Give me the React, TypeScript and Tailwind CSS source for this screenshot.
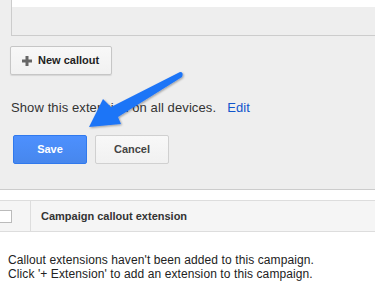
import React from "react";

export default function App() {
  return (
    <div className="relative w-[375px] h-[301px] overflow-hidden bg-white" style={{ fontFamily: '"Liberation Sans", Arial, sans-serif' }}>
      <div className="h-[190px] bg-[#eeeeee] border-b border-[#cccccc]">
        <div className="ml-[11px] h-[36px] border-l border-b border-[#cccccc] flex flex-col">
          <div className="h-[7px] bg-white" />
        </div>
        <div className="pt-[10px] pl-[10px]">
          <button className="h-[29px] w-[102px] flex items-center gap-[6px] pl-[11px] border border-[#c6c6c6] rounded-[2px] bg-gradient-to-b from-[#f8f8f8] to-[#f1f1f1] shadow-[0_1px_1px_rgba(0,0,0,0.1)] text-[11px] font-bold text-[#222]">
            <svg width="10" height="10" viewBox="0 0 10 10"><path d="M3.5 0h3v3.5H10v3H6.5V10h-3V6.5H0v-3h3.5z" fill="#666" /></svg>
            New callout
          </button>
        </div>
        <div className="pl-[11px] mt-[25px] text-[13px] tracking-[0.1px] text-[#333] leading-[16px]">
          Show this extension on all devices.<span className="ml-[11px] text-[#1155cc]">Edit</span>
        </div>
        <div className="flex gap-[8px] pl-[13px] mt-[19px]">
          <button className="h-[29px] w-[74px] border border-[#3079ed] rounded-[2px] bg-gradient-to-b from-[#4d90fe] to-[#4787ed] text-white text-[11px] font-bold">Save</button>
          <button className="h-[29px] w-[74px] border border-[#d0d0d0] rounded-[2px] bg-gradient-to-b from-[#f8f8f8] to-[#f1f1f1] text-[#444] text-[11px] font-bold">Cancel</button>
        </div>
      </div>
      <div className="mt-[10px] h-[32px] bg-[#f5f5f5] border-t border-b border-[#dddddd] flex items-center">
        <div className="w-[31px] h-full border-r border-[#dddddd] flex items-center">
          <div className="ml-[-2px] w-[14px] h-[13px] bg-white border border-[#bbbbbb]" />
        </div>
        <div className="pl-[10px] text-[11px] font-bold text-[#333]">Campaign callout extension</div>
      </div>
      <div className="pl-[8px] pt-[21px] text-[12px] leading-[14px] tracking-[0.1px] text-[#222]">
        <div>Callout extensions haven't been added to this campaign.</div>
        <div>Click '+ Extension' to add an extension to this campaign.</div>
      </div>
      <svg className="absolute left-0 top-0 pointer-events-none" width="375" height="301" viewBox="0 0 375 301">
        <defs>
          <filter id="sh" x="-20%" y="-20%" width="140%" height="140%">
            <feDropShadow dx="1" dy="1" stdDeviation="1.2" floodColor="#000" floodOpacity="0.35" />
          </filter>
        </defs>
        <path d="M89 127 L103 99 L111 107 L180 72 Q184 72 182 77 L118 117 L121 124 Z" fill="#1f74f7" filter="url(#sh)" />
      </svg>
    </div>
  );
}
